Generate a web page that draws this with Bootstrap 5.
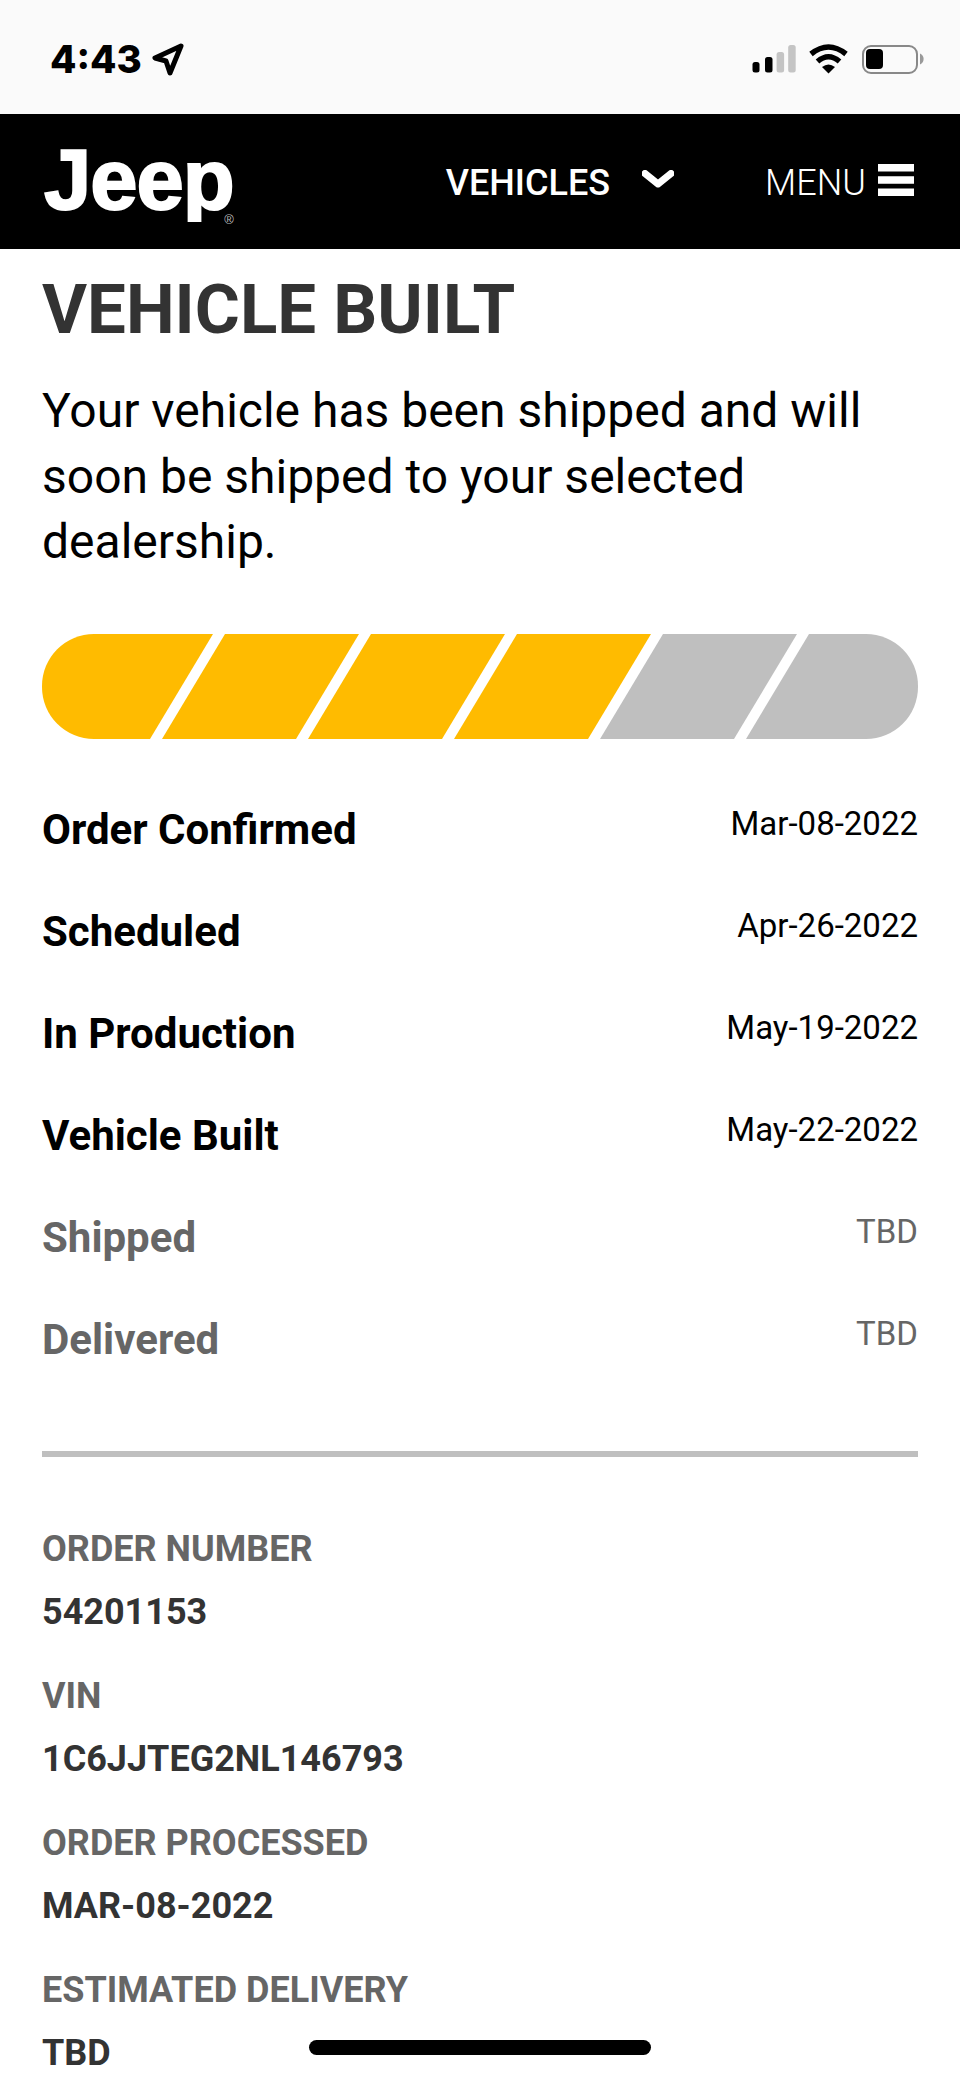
<!DOCTYPE html>
<html lang="en">
<head>
    <meta charset="UTF-8">
    <meta name="viewport" content="width=device-width, initial-scale=1.0">
    <title>Vehicle Built</title>
    <link href="https://cdn.jsdelivr.net/npm/bootstrap@5.3.0/dist/css/bootstrap.min.css" rel="stylesheet">
    <style>
        html, body {
            height: 2079px;
            overflow: hidden;
        }
        body {
            font-family: Roboto, "Liberation Sans", sans-serif;
            background-color: #fff;
            color: #000;
            position: relative;
        }
        .status-strip {
            height: 114px;
            background-color: #fafafa;
            padding: 4px 36px 0 50px;
        }
        .status-time {
            font-family: Inter, "Liberation Sans", sans-serif;
            font-weight: 800;
            font-size: 38.500px;
            line-height: 1;
        }
        .site-bar {
            height: 135px;
            background-color: #000;
            padding: 2px 46px 0 44px;
        }
        .jeep-wrap {
            position: relative;
            margin-bottom: 6px;
        }
        .jeep-logo {
            display: block;
            font-family: "Liberation Sans", Arial, sans-serif;
            font-weight: 700;
            font-size: 85px;
            letter-spacing: -1px;
            line-height: 1;
            color: #fff;
            -webkit-text-stroke: 2px #fff;
            clip-path: inset(-5px -10px 0 -5px);
        }
        .jeep-reg {
            position: absolute;
            right: 0;
            bottom: -4px;
            font-family: "Liberation Sans", Arial, sans-serif;
            font-size: 13px;
            line-height: 1;
            color: #bbb;
        }
        .site-link {
            color: #fff;
            font-size: 36px;
            line-height: 1;
        }
        .chevron-icon {
            margin-left: 32px;
            margin-bottom: 5px;
        }
        .burger-icon {
            margin-left: 12px;
            margin-bottom: 5px;
        }
        .menu-link {
            margin-left: 91px;
        }
        .page-body {
            padding: 23px 42px 0;
        }
        .page-title {
            font-size: 69px;
            font-weight: 700;
            color: #333;
            line-height: 76px;
            margin: 0 0 30px;
        }
        .page-intro {
            font-size: 48px;
            line-height: 65.500px;
            margin: 0 0 59px;
        }
        .step-bar {
            margin-bottom: 65px;
        }
        .step-row {
            height: 102px;
        }
        .step-name {
            font-size: 42px;
            font-weight: 700;
            line-height: 48px;
            margin-top: 2px;
        }
        .step-date {
            font-size: 33px;
            line-height: 40px;
        }
        .step-off {
            color: #666;
        }
        .section-line {
            border: 0;
            border-top: 6px solid #bfbfbf;
            opacity: 1;
            margin: 35px 0 72px;
        }
        .info-label {
            font-size: 36px;
            font-weight: 700;
            color: #666;
            line-height: 40px;
        }
        .info-value {
            font-size: 36px;
            font-weight: 700;
            color: #333;
            line-height: 40px;
            margin: 23.500px 0 43.500px;
        }
        .home-pill {
            position: absolute;
            left: 309px;
            top: 2040px;
            width: 342px;
            height: 15px;
            background-color: #000;
            border-radius: 8px;
        }
    </style>
</head>
<body>
    <div class="status-strip d-flex align-items-center justify-content-between">
        <div class="d-flex align-items-center gap-2">
            <span class="status-time">4:43</span>
            <svg width="36" height="36" viewBox="0 0 36 36"><path d="M31 5 5 17l11 3 4 12z" fill="none" stroke="#000" stroke-width="5" stroke-linejoin="round"/></svg>
        </div>
        <svg width="172" height="30" viewBox="0 0 172 30">
            <rect x="0.500" y="18" width="7" height="10.500" rx="2.500" fill="#000"/>
            <rect x="13" y="13" width="7.500" height="15.500" rx="2.500" fill="#000"/>
            <rect x="24.600" y="8" width="7.500" height="20.500" rx="2.500" fill="#c4c4c4"/>
            <rect x="36.200" y="1" width="7.500" height="27.500" rx="2.500" fill="#c4c4c4"/>
            <path d="M59 10Q76.500-4 94 10M65.500 17.500Q76.500 8 87.500 17.500" fill="none" stroke="#000" stroke-width="5.500"/>
            <path d="M70 23Q76.500 18 83 23l-6.500 6.500z" fill="#000"/>
            <rect x="111" y="2" width="54" height="27" rx="8" fill="none" stroke="#888" stroke-width="2"/>
            <rect x="114" y="5" width="17" height="20" rx="4" fill="#000"/>
            <path d="M168 9.500a6 6 0 0 1 0 11z" fill="#999"/>
        </svg>
    </div>

    <nav class="site-bar d-flex align-items-center justify-content-between">
        <div class="jeep-wrap">
            <a class="jeep-logo text-decoration-none" href="#">Jeep</a>
            <span class="jeep-reg">®</span>
        </div>
        <div class="d-flex align-items-center">
            <a class="site-link fw-medium text-decoration-none d-flex align-items-center" href="#">VEHICLES
                <svg class="chevron-icon" width="32" height="20" viewBox="0 0 32 20"><path d="M3 3.500 16 14 29 3.500" fill="none" stroke="#fff" stroke-width="7" stroke-linejoin="round" stroke-linecap="round"/></svg>
            </a>
            <a class="site-link menu-link fw-light text-decoration-none d-flex align-items-center" href="#">MENU
                <svg class="burger-icon" width="36" height="32" viewBox="0 0 36 32"><path d="M0 0h36v7.500H0zM0 12.200h36v7.500H0zM0 24.500h36V32H0z" fill="#fff"/></svg>
            </a>
        </div>
    </nav>

    <main class="page-body">
        <h1 class="page-title">VEHICLE BUILT</h1>
        <p class="page-intro">Your vehicle has been shipped and will soon be shipped to your selected dealership.</p>

        <svg class="d-block step-bar" width="876" height="105" viewBox="0 0 876 105">
            <defs><clipPath id="bar-clip"><rect width="876" height="105" rx="52"/></clipPath></defs>
            <g clip-path="url(#bar-clip)">
                <polygon points="0,0 171,0 108,105 0,105" fill="#ffbb00"/>
                <polygon points="183,0 317,0 254,105 120,105" fill="#ffbb00"/>
                <polygon points="329,0 463,0 400,105 266,105" fill="#ffbb00"/>
                <polygon points="475,0 609,0 546,105 412,105" fill="#ffbb00"/>
                <polygon points="621,0 755,0 692,105 558,105" fill="#bfbfbf"/>
                <polygon points="767,0 876,0 876,105 704,105" fill="#bfbfbf"/>
            </g>
        </svg>

        <div class="step-row d-flex justify-content-between"><span class="step-name">Order Confirmed</span><span class="step-date">Mar-08-2022</span></div>
        <div class="step-row d-flex justify-content-between"><span class="step-name">Scheduled</span><span class="step-date">Apr-26-2022</span></div>
        <div class="step-row d-flex justify-content-between"><span class="step-name">In Production</span><span class="step-date">May-19-2022</span></div>
        <div class="step-row d-flex justify-content-between"><span class="step-name">Vehicle Built</span><span class="step-date">May-22-2022</span></div>
        <div class="step-row d-flex justify-content-between step-off"><span class="step-name">Shipped</span><span class="step-date">TBD</span></div>
        <div class="step-row d-flex justify-content-between step-off"><span class="step-name">Delivered</span><span class="step-date">TBD</span></div>

        <hr class="section-line">

        <div class="info-label">ORDER NUMBER</div>
        <div class="info-value">54201153</div>
        <div class="info-label">VIN</div>
        <div class="info-value">1C6JJTEG2NL146793</div>
        <div class="info-label">ORDER PROCESSED</div>
        <div class="info-value">MAR-08-2022</div>
        <div class="info-label">ESTIMATED DELIVERY</div>
        <div class="info-value">TBD</div>
    </main>
    <div class="home-pill"></div>
    <script src="https://cdn.jsdelivr.net/npm/bootstrap@5.3.0/dist/js/bootstrap.bundle.min.js"></script>
</body>
</html>
